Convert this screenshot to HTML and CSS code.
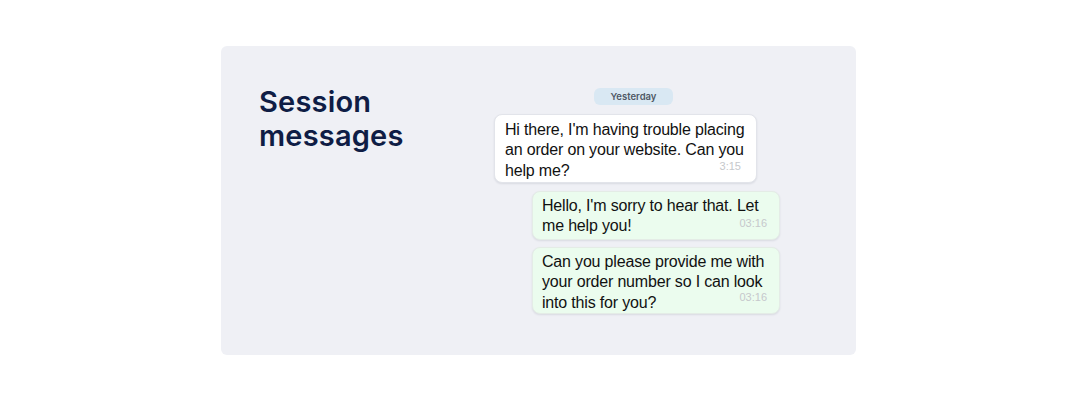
FILE: index.html
```html
<!DOCTYPE html>
<html>
<head>
<meta charset="utf-8">
<link rel="stylesheet" href="styles.css">
</head>
<body>
<div class="page">
  <section class="card">
    <h1 class="title">Session<br>messages</h1>
    <div class="chat">
      <div class="day">Yesterday</div>
      <div class="bubble incoming">Hi there, I'm having trouble placing an order on your website. Can you help me?<span class="time">3:15</span></div>
      <div class="bubble outgoing">Hello, I'm sorry to hear that. Let me help you!<span class="time">03:16</span></div>
      <div class="bubble outgoing">Can you please provide me with your order number so I can look into this for you?<span class="time">03:16</span></div>
    </div>
  </section>
</div>
</body>
</html>
```

FILE: styles.css
```css
* { box-sizing: border-box; }
html, body { margin: 0; padding: 0; background: #ffffff; }
.page {
  width: 1076px;
  height: 403px;
  padding: 46px 0 0 221px;
}
.card {
  width: 635px;
  height: 309px;
  background: #eff0f5;
  border-radius: 6px;
  display: flex;
  padding: 42px 0 0 38px;
}
.title {
  margin: -3px 0 0 0;
  width: 235px;
  font-family: Inter, "Noto Sans", sans-serif;
  font-weight: 600;
  font-size: 29px;
  line-height: 33.5px;
  color: #0f1d45;
  letter-spacing: 0.2px;
}
.chat {
  width: 286px;
  display: flex;
  flex-direction: column;
  align-items: flex-start;
  font-family: "Liberation Sans", Arial, sans-serif;
}
.day {
  align-self: center;
  margin-left: -7px;
  width: 79px;
  height: 17px;
  border-radius: 6px;
  background: #d9e8f3;
  color: #4f5866;
  font-family: Inter, sans-serif;
  font-weight: 600;
  font-size: 9.5px;
  line-height: 17px;
  text-align: center;
}
.bubble {
  position: relative;
  font-size: 16px;
  line-height: 20.3px;
  letter-spacing: -0.18px;
  color: #111111;
  border-radius: 8px;
  box-shadow: 0 1px 2px rgba(20, 30, 60, 0.10);
}
.incoming {
  margin-top: 9px;
  width: 263px;
  height: 69px;
  padding: 5px 6px 0 10px;
  background: #ffffff;
  border: 1px solid #e2e4ea;
}
.outgoing {
  align-self: flex-end;
  width: 248px;
  padding: 4px 6px 0 9px;
  background: #ebfcee;
  border: 1px solid #e4ece6;
}
.outgoing:nth-child(3) { margin-top: 8px; height: 49px; }
.outgoing:nth-child(4) { margin-top: 7px; height: 67px; }
.time {
  position: absolute;
  bottom: 10px;
  right: 15px;
  font-size: 11px;
  line-height: 12px;
  letter-spacing: 0;
  color: #c6c8cc;
}
.outgoing .time { right: 12px; }
```
